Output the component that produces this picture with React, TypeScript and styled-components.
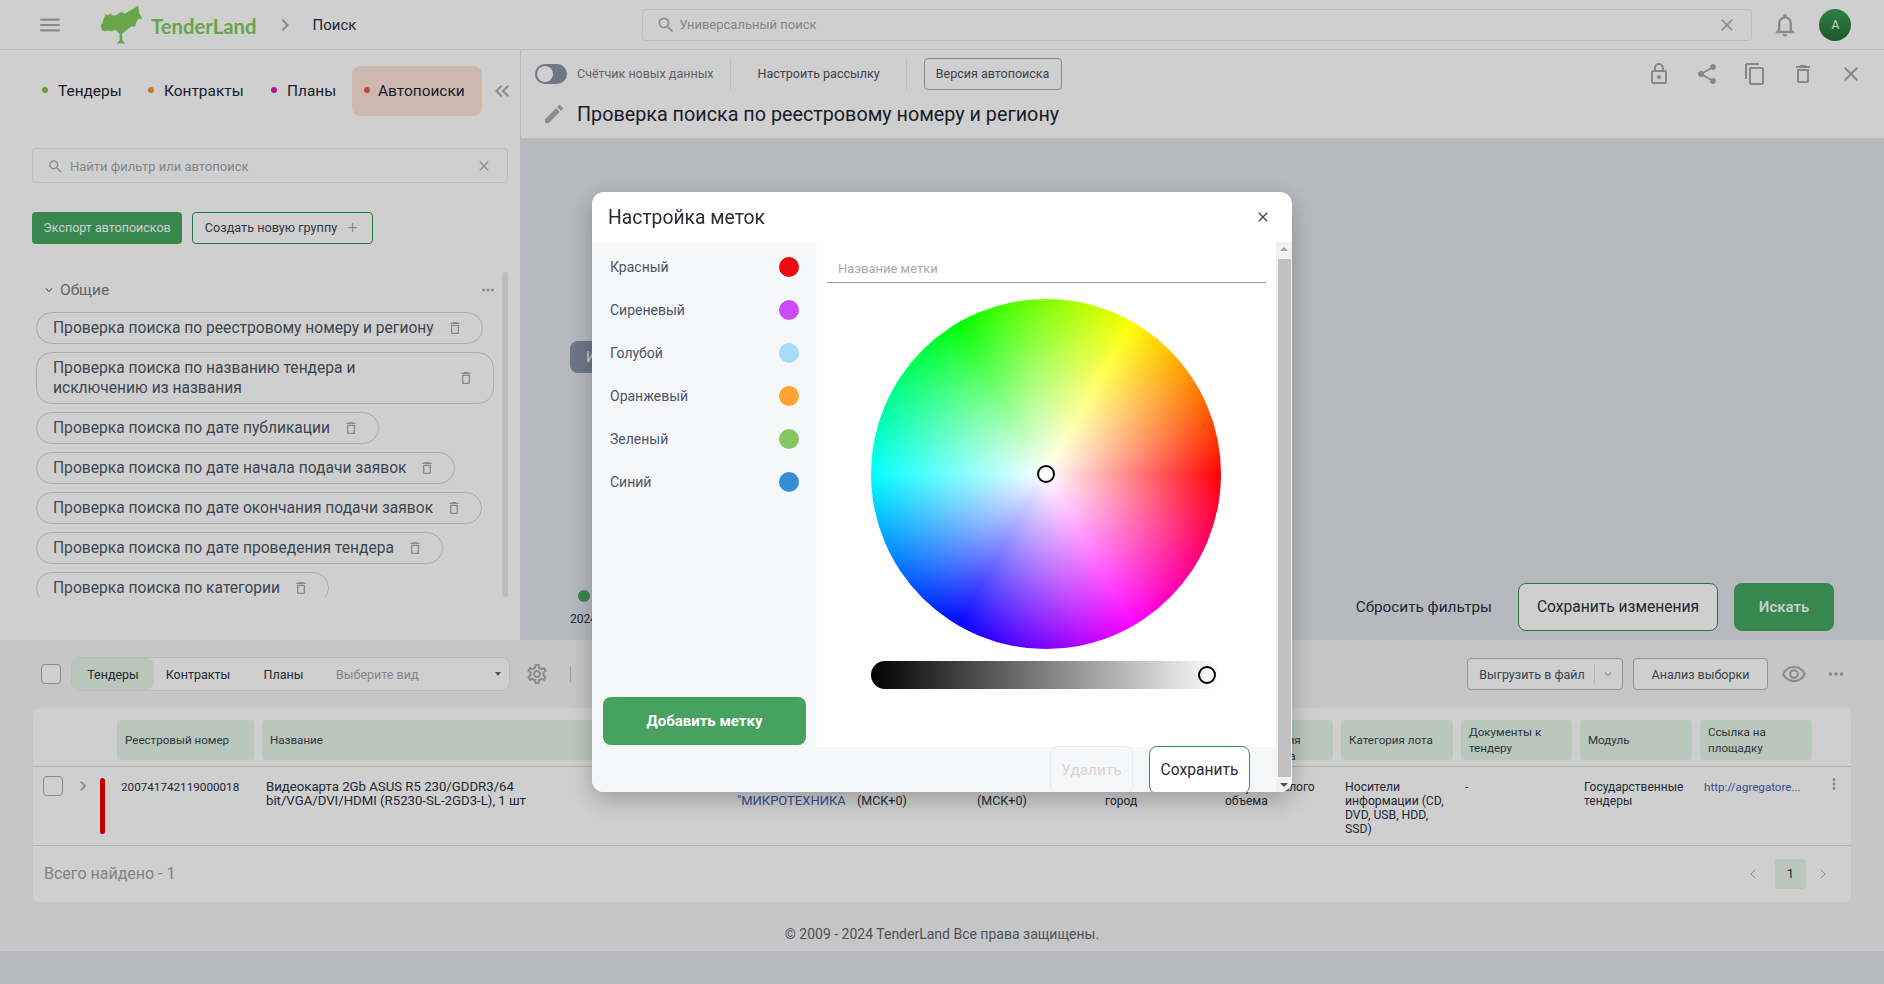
import React from "react";
import styled, { createGlobalStyle } from "styled-components";
import { ChevronLeft, ChevronRight } from "lucide-react";
import {
  MdAdd,
  MdChevronRight,
  MdClose,
  MdContentCopy,
  MdEdit,
  MdExpandMore,
  MdKeyboardDoubleArrowLeft,
  MdLockOutline,
  MdMenu,
  MdMoreHoriz,
  MdMoreVert,
  MdNotificationsNone,
  MdOutlineDelete,
  MdOutlineRemoveRedEye,
  MdOutlineSettings,
  MdSearch,
  MdShare,
} from "react-icons/md";

const GlobalStyle = createGlobalStyle`
  html, body {
    margin: 0;
    padding: 0;
    height: 100%;
    overflow: hidden;
    background: #e0e4e9;
    font-family: Roboto, "Liberation Sans", sans-serif;
  }
  * { box-sizing: border-box; }
`;

const iconGrey = "#aaabb1";

const Page = styled.div`
  width: 1884px;
  height: 984px;
  display: flex;
  flex-direction: column;
  background: #e0e4e9;
  color: #2a3142;
`;

const TopBar = styled.header`
  height: 50px;
  flex: none;
  display: flex;
  align-items: center;
  background: #fff;
  border-bottom: 1px solid #ececec;
  padding-left: 37px;
`;

const MenuIcon = styled(MdMenu)`
  width: 26px;
  height: 26px;
  color: ${iconGrey};
`;

const LogoLink = styled.div`
  display: flex;
  align-items: center;
  margin-left: 36px;
  gap: 8px;
`;

const LogoText = styled.span`
  font-family: Lato, sans-serif;
  font-weight: 700;
  font-size: 20.3px;
  color: #80cc5d;
  margin-top: 2px;
`;

const Crumb = styled.span`
  font-size: 15px;
  color: #2a3142;
  margin-left: 16px;
`;

const CrumbArrow = styled(MdChevronRight)`
  width: 24px;
  height: 24px;
  margin-left: 16px;
  color: ${iconGrey};
`;

const GlobalSearch = styled.div`
  width: 1110px;
  height: 32px;
  margin-left: 286px;
  display: flex;
  align-items: center;
  padding: 0 14px 0 13px;
  border: 1px solid #eaeaea;
  border-radius: 4px;
  font-size: 13px;
  color: #a3a5ab;
`;

const SearchGlyph = styled(MdSearch)`
  width: 20px;
  height: 20px;
  color: ${iconGrey};
  margin-right: 3px;
`;

const ClearGlyph = styled(MdClose)`
  width: 20px;
  height: 20px;
  margin-left: auto;
  color: ${iconGrey};
`;

const BellIcon = styled(MdNotificationsNone)`
  width: 28px;
  height: 28px;
  margin-left: 19px;
  color: ${iconGrey};
`;

const Avatar = styled.div`
  width: 32px;
  height: 32px;
  margin-left: 20px;
  border-radius: 50%;
  display: flex;
  align-items: center;
  justify-content: center;
  font-size: 12px;
  color: #fff;
  background: linear-gradient(180deg, #3c9f52, #246a36);
`;

const Workspace = styled.div`
  height: 590px;
  flex: none;
  display: flex;
`;

const SidePanel = styled.aside`
  width: 521px;
  flex: none;
  background: #fff;
  border-right: 1px solid #e4e4e4;
  padding: 16px 12px 0 32px;
`;

const TabsRow = styled.div`
  height: 50px;
  display: flex;
  align-items: center;
`;

const SideTab = styled.div<{ $active?: boolean; $width: number; $dot: string }>`
  width: ${(p) => p.$width}px;
  height: 50px;
  flex: none;
  display: flex;
  align-items: center;
  padding: 0 0 1px 26px;
  border-radius: 8px;
  font-size: 15.45px;
  color: #1f2636;
  background: ${(p) => (p.$active ? "#fde3d9" : "transparent")};
  position: relative;

  &::before {
    content: "";
    position: absolute;
    left: ${(p) => (p.$active ? 12 : 10)}px;
    top: 21px;
    width: 6px;
    height: 6px;
    border-radius: 50%;
    background: ${(p) => p.$dot};
  }
`;

const CollapseIcon = styled(MdKeyboardDoubleArrowLeft)`
  width: 24px;
  height: 24px;
  flex: none;
  margin-left: 8px;
  color: ${iconGrey};
`;

const SideSearch = styled.div`
  height: 35px;
  margin-top: 32px;
  display: flex;
  align-items: center;
  padding: 1px 15px 0 14px;
  border: 1px solid #eaeaea;
  border-radius: 4px;
  font-size: 13px;
  color: #a3a5ab;
`;

const SmallSearchGlyph = styled(MdSearch)`
  width: 17px;
  height: 17px;
  color: ${iconGrey};
  margin-right: 6px;
`;

const SmallClearGlyph = styled(MdClose)`
  width: 16px;
  height: 16px;
  margin-left: auto;
  color: ${iconGrey};
`;

const ButtonsRow = styled.div`
  display: flex;
  gap: 10px;
  margin-top: 29px;
`;

const FilledSmallButton = styled.div`
  width: 150px;
  height: 32px;
  display: flex;
  align-items: center;
  justify-content: center;
  padding-bottom: 1px;
  border-radius: 4px;
  background: #44a762;
  color: #fff;
  font-size: 12.5px;
`;

const OutlineSmallButton = styled.div`
  width: 181px;
  height: 32px;
  display: flex;
  align-items: center;
  justify-content: center;
  gap: 8px;
  padding-bottom: 1px;
  border-radius: 4px;
  border: 1px solid #2c9349;
  background: #fff;
  color: #3d4455;
  font-size: 12.65px;
`;

const PlusGlyph = styled(MdAdd)`
  width: 15px;
  height: 15px;
  color: ${iconGrey};
`;

const GroupBlock = styled.div`
  height: 325px;
  margin-top: 28px;
  display: flex;
  justify-content: space-between;
`;

const GroupColumn = styled.div`
  width: 468px;
`;

const GroupHeader = styled.div`
  height: 20px;
  margin-top: 8px;
  display: flex;
  align-items: center;
  padding-left: 10px;
  font-size: 15.5px;
  color: #7b7e86;
`;

const GroupCaret = styled(MdExpandMore)`
  width: 14px;
  height: 14px;
  margin-right: 4px;
`;

const GroupMenu = styled(MdMoreHoriz)`
  width: 18px;
  height: 18px;
  margin-left: auto;
  margin-right: 3px;
  color: ${iconGrey};
`;

const ChipList = styled.div`
  height: 285px;
  margin-top: 12px;
  padding-left: 4px;
  display: flex;
  flex-direction: column;
  align-items: flex-start;
  gap: 8px;
  overflow: hidden;
`;

const Chip = styled.div`
  flex: none;
  max-width: 458px;
  display: flex;
  align-items: center;
  padding: 5px 19px 5px 16px;
  border: 1px solid #d2d3d7;
  border-radius: 16px;
  font-size: 15.6px;
  line-height: 20px;
  color: #4c5566;
`;

const ChipTrash = styled(MdOutlineDelete)`
  width: 16px;
  height: 16px;
  flex: none;
  margin-left: 13px;
  color: ${iconGrey};
`;

const SideScroll = styled.div`
  width: 6px;
  border-radius: 3px;
  background: #e8e9ee;
`;

const MainPanel = styled.main`
  flex: 1;
  display: flex;
  flex-direction: column;
`;

const MainHead = styled.div`
  height: 88px;
  flex: none;
  background: #fff;
  padding: 8px 21px 0 14px;
`;

const HeadRow = styled.div`
  height: 32px;
  display: flex;
  align-items: center;
  font-size: 12.5px;
  color: #4a5262;
`;

const Toggle = styled.div`
  width: 32px;
  height: 20px;
  border-radius: 10px;
  background: #8b92a0;
  position: relative;

  &::after {
    content: "";
    position: absolute;
    left: 2px;
    top: 2px;
    width: 16px;
    height: 16px;
    border-radius: 50%;
    background: #fff;
  }
`;

const ToggleLabel = styled.span`
  margin: 0 0 1px 10px;
  color: #757a85;
`;

const HeadDivider = styled.span`
  width: 1px;
  height: 32px;
  margin: 0 16px;
  background: #ececec;
`;

const MailLink = styled.span`
  margin: 0 10px 1px 11px;
`;

const VersionButton = styled.div`
  width: 138px;
  height: 32px;
  display: flex;
  align-items: center;
  justify-content: center;
  padding-bottom: 1px;
  border: 1px solid #a9abb1;
  border-radius: 4px;
  margin-left: 1px;
`;

const HeadActions = styled.div`
  margin-left: auto;
  display: flex;
  gap: 24px;
  color: #a7a8ae;
  font-size: 24px;

  svg {
    display: block;
  }
`;

const TitleRow = styled.div`
  display: flex;
  align-items: center;
  margin-top: 12px;
  padding-left: 7px;
  font-size: 19.75px;
  color: #1f2636;
`;

const TitlePencil = styled(MdEdit)`
  width: 24px;
  height: 24px;
  margin-right: 11px;
  color: ${iconGrey};
`;

const FilterArea = styled.div`
  flex: 1;
  padding: 203px 50px 0 49px;
  position: relative;
  display: flex;
  flex-direction: column;
`;

const FilterPill = styled.div`
  width: 120px;
  height: 32px;
  display: flex;
  align-items: center;
  padding-left: 16px;
  border-radius: 8px;
  background: #8793a8;
  color: #fff;
  font-size: 14px;
`;

const TimelineDot = styled.div`
  width: 12px;
  height: 12px;
  margin: 217px 0 0 8px;
  border-radius: 50%;
  background: #44a762;
`;

const TimelineDate = styled.div`
  margin-top: 10px;
  font-size: 12px;
  color: #2a3142;
`;

const FilterActions = styled.div`
  position: absolute;
  right: 50px;
  top: 445px;
  display: flex;
  align-items: center;
`;

const ResetLink = styled.span`
  font-size: 15.3px;
  color: #2a3142;
  margin-right: 26px;
`;

const SaveChanges = styled.div`
  width: 200px;
  height: 48px;
  display: flex;
  align-items: center;
  justify-content: center;
  border: 1px solid #2c9349;
  border-radius: 8px;
  background: #fff;
  font-size: 15.6px;
  color: #2a3142;
`;

const SearchButton = styled.div`
  width: 100px;
  height: 48px;
  margin-left: 16px;
  display: flex;
  align-items: center;
  justify-content: center;
  border-radius: 8px;
  background: #44a762;
  font-size: 15px;
  font-weight: 500;
  color: #fff;
`;

const ResultsSection = styled.section`
  height: 311px;
  flex: none;
  padding: 17px 33px 0;
  background: #f4f4f4;
  display: flex;
  flex-direction: column;
`;

const ResultsToolbar = styled.div`
  height: 34px;
  display: flex;
  align-items: center;
`;

const CheckBox = styled.div`
  width: 20px;
  height: 20px;
  flex: none;
  border: 1px solid #a9abb1;
  border-radius: 4px;
  background: #fff;
`;

const ToolbarCheck = styled(CheckBox)`
  margin-left: 8px;
`;

const ViewSwitch = styled.div`
  width: 439px;
  height: 34px;
  margin-left: 10px;
  display: flex;
  align-items: center;
  border: 1px solid #e6e6e6;
  border-radius: 8px;
  background: #fff;
  font-size: 12.5px;
  color: #2a3142;
  position: relative;
`;

const ViewTab = styled.div<{ $active?: boolean; $width: number }>`
  width: ${(p) => p.$width}px;
  height: 32px;
  display: flex;
  align-items: center;
  justify-content: center;
  border-radius: 8px;
  background: ${(p) => (p.$active ? "#e4f5e8" : "transparent")};
`;

const ViewSelect = styled.span`
  margin-left: 11px;
  color: #a3a5ab;
`;

const SelectCaret = styled.span`
  position: absolute;
  right: 8px;
  top: 14px;
  border: 3px solid transparent;
  border-top: 4px solid #666;
`;

const GearIcon = styled(MdOutlineSettings)`
  width: 24px;
  height: 24px;
  margin-left: 15px;
  color: ${iconGrey};
`;

const ToolbarDivider = styled.span`
  width: 1px;
  height: 16px;
  margin-left: 21px;
  background: #bdbdbd;
`;

const ToolbarRight = styled.div`
  margin-left: auto;
  margin-right: 4px;
  display: flex;
  align-items: center;
`;

const ToolbarButton = styled.div<{ $width: number }>`
  width: ${(p) => p.$width}px;
  height: 32px;
  display: flex;
  align-items: center;
  justify-content: center;
  border: 1px solid #b5b7bc;
  border-radius: 4px;
  background: #fff;
  font-size: 12.5px;
  color: #4a5262;
  margin-right: 10px;
`;

const ExportButton = styled(ToolbarButton)`
  padding-left: 4px;
`;

const ExportDivider = styled.span`
  width: 1px;
  height: 20px;
  margin: 0 6px 0 9px;
  background: #e4e4e4;
`;

const ExportCaret = styled(MdExpandMore)`
  width: 14px;
  height: 14px;
  color: ${iconGrey};
`;

const EyeIcon = styled(MdOutlineRemoveRedEye)`
  width: 26px;
  height: 26px;
  margin-left: 3px;
  color: ${iconGrey};
`;

const ToolbarDots = styled(MdMoreHoriz)`
  width: 22px;
  height: 22px;
  margin-left: 18px;
  color: ${iconGrey};
`;

const ResultsCard = styled.div`
  height: 194px;
  margin-top: 17px;
  background: #fff;
  border-radius: 6px;
`;

const tableColumns =
  "137px 463px 112px 112px 120px 112px 112px 112px 111px 112px 112px";

const HeaderRow = styled.div`
  height: 59px;
  padding: 12px 0 0 84px;
  display: grid;
  grid-template-columns: ${tableColumns};
  gap: 8px;
  border-bottom: 1px solid #dcdcdc;
`;

const HeaderCell = styled.div`
  height: 40px;
  display: flex;
  align-items: center;
  padding: 0 8px;
  border-radius: 4px;
  background: #e4f5e8;
  font-size: 11.6px;
  line-height: 16px;
  color: #3a4152;
`;

const DataRow = styled.div`
  height: 79px;
  display: flex;
  position: relative;
  border-bottom: 1px solid #dcdcdc;
`;

const RowControls = styled.div`
  width: 84px;
  flex: none;
  padding: 9px 0 0 10px;
  display: flex;
  align-items: flex-start;
`;

const RowChevron = styled(MdChevronRight)`
  width: 20px;
  height: 20px;
  margin-left: 10px;
  color: ${iconGrey};
`;

const RowMark = styled.span`
  width: 5px;
  height: 56px;
  margin: 2px 0 0 7px;
  border-radius: 3px;
  background: #f00000;
`;

const RowCells = styled.div`
  display: grid;
  grid-template-columns: ${tableColumns};
  gap: 8px;
`;

const RowCell = styled.div<{ $link?: boolean; $size: number }>`
  padding: 13px 4px 0;
  font-size: ${(p) => p.$size}px;
  line-height: 14px;
  color: ${(p) => (p.$link ? "#3f62b5" : "#2a3142")};
  overflow: hidden;
  white-space: pre-line;
`;

const RowMenu = styled(MdMoreVert)`
  position: absolute;
  right: 8px;
  top: 8px;
  width: 18px;
  height: 18px;
  color: ${iconGrey};
`;

const CardFooter = styled.div`
  height: 55px;
  display: flex;
  align-items: center;
  padding: 0 20px 0 11px;
  font-size: 16px;
  color: #a0a2a8;
`;

const Pager = styled.div`
  margin-left: auto;
  display: flex;
  align-items: center;
  color: ${iconGrey};
`;

const PagerCurrent = styled.div`
  width: 31px;
  height: 30px;
  margin: 0 9px 0 14px;
  display: flex;
  align-items: center;
  justify-content: center;
  border-radius: 4px;
  background: #e4f5e8;
  font-size: 13px;
  color: #2a3142;
`;

const Copyright = styled.div`
  margin-top: 24px;
  text-align: center;
  font-size: 14px;
  color: #5f6570;
`;

const Overlay = styled.div`
  position: fixed;
  inset: 0;
  display: flex;
  align-items: center;
  justify-content: center;
  background: rgba(0, 0, 0, 0.19);
`;

const Modal = styled.div`
  width: 700px;
  height: 600px;
  display: flex;
  flex-direction: column;
  overflow: hidden;
  border-radius: 12px;
  background: #fff;
  box-shadow: 0 8px 24px rgba(0, 0, 0, 0.25);
`;

const ModalHead = styled.div`
  height: 50px;
  flex: none;
  display: flex;
  align-items: center;
  padding: 0 21px 0 16px;
  font-size: 19.3px;
  color: #2a2d34;
`;

const ModalClose = styled(MdClose)`
  width: 16px;
  height: 16px;
  margin-left: auto;
  color: #444;
`;

const ModalBody = styled.div`
  flex: 1;
  min-height: 0;
  display: flex;
`;

const ModalMain = styled.div`
  flex: 1;
  display: flex;
  flex-direction: column;
  background: #f6f7f9;
`;

const ModalColumns = styled.div`
  height: 505px;
  flex: none;
  display: flex;
`;

const LabelColumn = styled.div`
  width: 225px;
  flex: none;
  padding: 3px 18px 0 18px;
  display: flex;
  flex-direction: column;
`;

const LabelRow = styled.div`
  height: 43px;
  flex: none;
  display: flex;
  align-items: center;
  justify-content: space-between;
  font-size: 14px;
  color: #4c5566;
`;

const LabelDot = styled.span<{ $color: string }>`
  width: 20px;
  height: 20px;
  border-radius: 50%;
  background: ${(p) => p.$color};
`;

const AddLabelButton = styled.div`
  width: 203px;
  height: 48px;
  margin: auto 0 2px -7px;
  flex: none;
  display: flex;
  align-items: center;
  justify-content: center;
  border-radius: 8px;
  background: #48a25f;
  color: #fff;
  font-size: 15px;
  font-weight: 700;
`;

const EditorColumn = styled.div`
  flex: 1;
  background: #fff;
  padding: 0 10px;
`;

const NameInput = styled.div`
  height: 41px;
  width: 439px;
  display: flex;
  align-items: flex-end;
  padding: 0 0 6px 11px;
  border-bottom: 1px solid #9a9a9a;
  font-size: 13px;
  color: #aaa;
`;

const Wheel = styled.div`
  width: 350px;
  height: 350px;
  margin: 16px 0 0 44px;
  border-radius: 50%;
  position: relative;
  background: radial-gradient(circle closest-side, #fff 0%, rgba(255, 255, 255, 0) 100%),
    conic-gradient(from 90deg, #f00, #f0f, #00f, #0ff, #0f0, #ff0, #f00);
`;

const PickerThumb = styled.span`
  position: absolute;
  left: 50%;
  top: 50%;
  width: 18px;
  height: 18px;
  margin: -9px 0 0 -9px;
  border: 2px solid #000;
  border-radius: 50%;
  background: #fff;
`;

const ShadeSlider = styled.div`
  width: 350px;
  height: 28px;
  margin: 12px 0 0 44px;
  border-radius: 14px;
  position: relative;
  background: linear-gradient(90deg, #000, #fff);
`;

const ShadeThumb = styled(PickerThumb)`
  left: auto;
  right: 5px;
  margin: -9px 0 0 0;
  background: transparent;
`;

const ModalFooter = styled.div`
  flex: 1;
  display: flex;
  justify-content: flex-end;
  gap: 16px;
  padding-right: 26px;
  margin-top: -1px;
`;

const DeleteButton = styled.div`
  width: 83px;
  height: 48px;
  display: flex;
  align-items: center;
  justify-content: center;
  border: 1px solid #ececec;
  border-radius: 8px;
  font-size: 15.4px;
  color: #d6d6d6;
`;

const SaveButton = styled.div`
  width: 101px;
  height: 48px;
  display: flex;
  align-items: center;
  justify-content: center;
  border: 1px solid #2c9349;
  border-radius: 8px;
  background: #fff;
  font-size: 15.6px;
  color: #2a2d34;
`;

const ModalScroll = styled.div`
  width: 16px;
  flex: none;
  display: flex;
  flex-direction: column;
  align-items: center;
  background: #f1f1f1;
`;

const ScrollArrow = styled.span<{ $up?: boolean }>`
  flex: none;
  width: 0;
  height: 4px;
  margin-top: ${(p) => (p.$up ? 5 : 6)}px;
  margin-bottom: ${(p) => (p.$up ? 8 : 5)}px;
  border-left: 4px solid transparent;
  border-right: 4px solid transparent;
  ${(p) =>
    p.$up
      ? "border-bottom: 4px solid #a3a3a3;"
      : "border-top: 4px solid #505050;"}
`;

const ScrollThumb = styled.span`
  width: 13px;
  flex: 1;
  background: #c1c1c1;
`;

const sideTabs = [
  { label: "Тендеры", dot: "#7fc14f", width: 106 },
  { label: "Контракты", dot: "#ef9a2e", width: 123 },
  { label: "Планы", dot: "#d21fa5", width: 91 },
  { label: "Автопоиски", dot: "#ef5c30", width: 130, active: true },
];

const searches = [
  "Проверка поиска по реестровому номеру и региону",
  "Проверка поиска по названию тендера и исключению из названия",
  "Проверка поиска по дате публикации",
  "Проверка поиска по дате начала подачи заявок",
  "Проверка поиска по дате окончания подачи заявок",
  "Проверка поиска по дате проведения тендера",
  "Проверка поиска по категории",
];

const labels = [
  { name: "Красный", color: "#f00710" },
  { name: "Сиреневый", color: "#c94bfb" },
  { name: "Голубой", color: "#a8dbfa" },
  { name: "Оранжевый", color: "#fea42f" },
  { name: "Зеленый", color: "#86c764" },
  { name: "Синий", color: "#368ed9" },
];

const headers = [
  "Реестровый номер",
  "Название",
  "Заказчик",
  "Начало подачи",
  "Окончание подачи",
  "Регион",
  "Способ определения поставщика",
  "Категория лота",
  "Документы к тендеру",
  "Модуль",
  "Ссылка на площадку",
];

const rowCells = [
  { text: "200741742119000018", size: 11.7 },
  { text: "Видеокарта 2Gb ASUS R5 230/GDDR3/64\nbit/VGA/DVI/HDMI (R5230-SL-2GD3-L), 1 шт", size: 13.2 },
  { text: 'ООО\n"МИКРОТЕХНИКА"', size: 13, link: true },
  { text: "24.04.2024 10:00\n(МСК+0)", size: 12.5 },
  { text: "24.04.2024 18:00\n(МСК+0)", size: 12.5 },
  { text: "Москва\nгород", size: 12 },
  { text: "Закупка малого\nобъема", size: 12 },
  { text: "Носители информации (CD, DVD, USB, HDD, SSD)", size: 12.2 },
  { text: "-", size: 12 },
  { text: "Государственные тендеры", size: 12 },
  { text: "http://agregatore...", size: 11.6, link: true },
];

const Logo = () => (
  <svg width="44" height="41" viewBox="25 12 135 123" aria-hidden="true">
    <path
      fill="#80cc5d"
      d="M30 75 L36 70 L38 60 L45 42 L52 46 L60 40 L68 47 L78 44 L88 38 L95 35 L102 40 L108 38 L122 30 L136 22 L145 15 L147 30 L148 38 L158 56 L148 56 L142 60 L138 72 L136 80 L124 80 L118 84 L110 90 L104 95 L96 100 L97 122 L106 132 L80 132 L88 122 L88 102 L78 92 L72 90 L62 94 L52 92 L42 94 L34 92 Z"
    />
  </svg>
);

const App = () => {
  return (
    <>
      <GlobalStyle />
      <Page>
        <TopBar>
          <MenuIcon />
          <LogoLink>
            <Logo />
            <LogoText>TenderLand</LogoText>
          </LogoLink>
          <CrumbArrow />
          <Crumb>Поиск</Crumb>
          <GlobalSearch>
            <SearchGlyph />
            Универсальный поиск
            <ClearGlyph />
          </GlobalSearch>
          <BellIcon />
          <Avatar>A</Avatar>
        </TopBar>

        <Workspace>
          <SidePanel>
            <TabsRow>
              {sideTabs.map((t) => (
                <SideTab key={t.label} $active={t.active} $width={t.width} $dot={t.dot}>
                  {t.label}
                </SideTab>
              ))}
              <CollapseIcon />
            </TabsRow>
            <SideSearch>
              <SmallSearchGlyph />
              Найти фильтр или автопоиск
              <SmallClearGlyph />
            </SideSearch>
            <ButtonsRow>
              <FilledSmallButton>Экспорт автопоисков</FilledSmallButton>
              <OutlineSmallButton>
                Создать новую группу
                <PlusGlyph />
              </OutlineSmallButton>
            </ButtonsRow>
            <GroupBlock>
              <GroupColumn>
                <GroupHeader>
                  <GroupCaret />
                  Общие
                  <GroupMenu />
                </GroupHeader>
                <ChipList>
                  {searches.map((s) => (
                    <Chip key={s}>
                      {s}
                      <ChipTrash />
                    </Chip>
                  ))}
                </ChipList>
              </GroupColumn>
              <SideScroll />
            </GroupBlock>
          </SidePanel>

          <MainPanel>
            <MainHead>
              <HeadRow>
                <Toggle />
                <ToggleLabel>Счётчик новых данных</ToggleLabel>
                <HeadDivider />
                <MailLink>Настроить рассылку</MailLink>
                <HeadDivider />
                <VersionButton>Версия автопоиска</VersionButton>
                <HeadActions>
                  <MdLockOutline />
                  <MdShare />
                  <MdContentCopy />
                  <MdOutlineDelete />
                  <MdClose />
                </HeadActions>
              </HeadRow>
              <TitleRow>
                <TitlePencil />
                Проверка поиска по реестровому номеру и региону
              </TitleRow>
            </MainHead>
            <FilterArea>
              <FilterPill>И</FilterPill>
              <TimelineDot />
              <TimelineDate>2024-01-01</TimelineDate>
              <FilterActions>
                <ResetLink>Сбросить фильтры</ResetLink>
                <SaveChanges>Сохранить изменения</SaveChanges>
                <SearchButton>Искать</SearchButton>
              </FilterActions>
            </FilterArea>
          </MainPanel>
        </Workspace>

        <ResultsSection>
          <ResultsToolbar>
            <ToolbarCheck />
            <ViewSwitch>
              <ViewTab $active $width={82}>Тендеры</ViewTab>
              <ViewTab $width={88}>Контракты</ViewTab>
              <ViewTab $width={83}>Планы</ViewTab>
              <ViewSelect>Выберите вид</ViewSelect>
              <SelectCaret />
            </ViewSwitch>
            <GearIcon />
            <ToolbarDivider />
            <ToolbarRight>
              <ExportButton $width={156}>
                Выгрузить в файл
                <ExportDivider />
                <ExportCaret />
              </ExportButton>
              <ToolbarButton $width={135}>Анализ выборки</ToolbarButton>
              <EyeIcon />
              <ToolbarDots />
            </ToolbarRight>
          </ResultsToolbar>

          <ResultsCard>
            <HeaderRow>
              {headers.map((h) => (
                <HeaderCell key={h}>{h}</HeaderCell>
              ))}
            </HeaderRow>
            <DataRow>
              <RowControls>
                <CheckBox />
                <RowChevron />
                <RowMark />
              </RowControls>
              <RowCells>
                {rowCells.map((c) => (
                  <RowCell key={c.text} $link={c.link} $size={c.size}>
                    {c.text}
                  </RowCell>
                ))}
              </RowCells>
              <RowMenu />
            </DataRow>
            <CardFooter>
              Всего найдено - 1
              <Pager>
                <ChevronLeft size={16} strokeWidth={1.5} />
                <PagerCurrent>1</PagerCurrent>
                <ChevronRight size={16} strokeWidth={1.5} />
              </Pager>
            </CardFooter>
          </ResultsCard>
          <Copyright>© 2009 - 2024 TenderLand Все права защищены.</Copyright>
        </ResultsSection>
      </Page>

      <Overlay>
        <Modal>
          <ModalHead>
            Настройка меток
            <ModalClose />
          </ModalHead>
          <ModalBody>
            <ModalMain>
              <ModalColumns>
                <LabelColumn>
                  {labels.map((l) => (
                    <LabelRow key={l.name}>
                      {l.name}
                      <LabelDot $color={l.color} />
                    </LabelRow>
                  ))}
                  <AddLabelButton>Добавить метку</AddLabelButton>
                </LabelColumn>
                <EditorColumn>
                  <NameInput>Название метки</NameInput>
                  <Wheel>
                    <PickerThumb />
                  </Wheel>
                  <ShadeSlider>
                    <ShadeThumb />
                  </ShadeSlider>
                </EditorColumn>
              </ModalColumns>
              <ModalFooter>
                <DeleteButton>Удалить</DeleteButton>
                <SaveButton>Сохранить</SaveButton>
              </ModalFooter>
            </ModalMain>
            <ModalScroll>
              <ScrollArrow $up />
              <ScrollThumb />
              <ScrollArrow />
            </ModalScroll>
          </ModalBody>
        </Modal>
      </Overlay>
    </>
  );
};

export default App;
